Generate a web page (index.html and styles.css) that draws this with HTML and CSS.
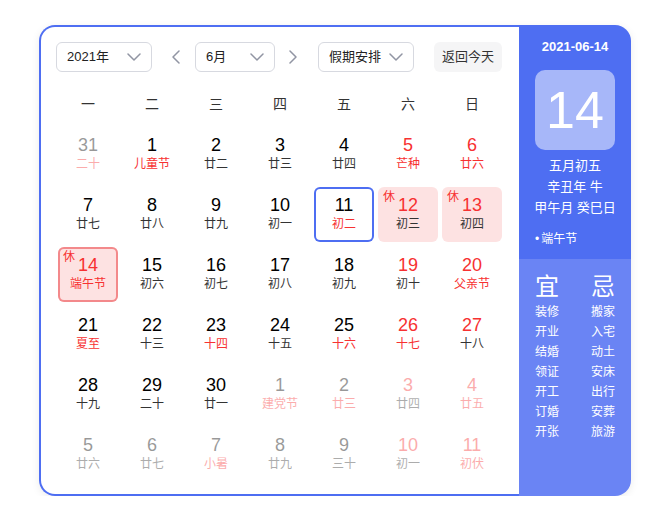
FILE: index.html
```html
<!DOCTYPE html>
<html lang="zh">
<head>
<meta charset="utf-8">
<title>万年历</title>
<link rel="stylesheet" href="styles.css">
</head>
<body>
<div class="calendar">
  <div class="main">
    <div class="toolbar">
      <div class="select year"><span>2021年</span><svg class="chev" width="14" height="8" viewBox="0 0 14 8"><path d="M1 1 L7 7 L13 1"/></svg></div>
      <div class="arrow prev"><svg width="8" height="14" viewBox="0 0 8 14"><path d="M7 1 L1 7 L7 13"/></svg></div>
      <div class="select month"><span>6月</span><svg class="chev" width="14" height="8" viewBox="0 0 14 8"><path d="M1 1 L7 7 L13 1"/></svg></div>
      <div class="arrow next"><svg width="8" height="14" viewBox="0 0 8 14"><path d="M1 1 L7 7 L1 13"/></svg></div>
      <div class="select holiday"><span>假期安排</span><svg class="chev" width="14" height="8" viewBox="0 0 14 8"><path d="M1 1 L7 7 L13 1"/></svg></div>
      <div class="today-btn">返回今天</div>
    </div>
    <div class="weekdays">
      <div>一</div><div>二</div><div>三</div><div>四</div><div>五</div><div>六</div><div>日</div>
    </div>
    <div class="days">
      <div class="cell off lred"><div class="num">31</div><div class="lunar">二十</div></div>
      <div class="cell lred"><div class="num">1</div><div class="lunar">儿童节</div></div>
      <div class="cell"><div class="num">2</div><div class="lunar">廿二</div></div>
      <div class="cell"><div class="num">3</div><div class="lunar">廿三</div></div>
      <div class="cell"><div class="num">4</div><div class="lunar">廿四</div></div>
      <div class="cell red lred"><div class="num">5</div><div class="lunar">芒种</div></div>
      <div class="cell red lred"><div class="num">6</div><div class="lunar">廿六</div></div>

      <div class="cell"><div class="num">7</div><div class="lunar">廿七</div></div>
      <div class="cell"><div class="num">8</div><div class="lunar">廿八</div></div>
      <div class="cell"><div class="num">9</div><div class="lunar">廿九</div></div>
      <div class="cell"><div class="num">10</div><div class="lunar">初一</div></div>
      <div class="cell sel lred"><div class="num">11</div><div class="lunar">初二</div></div>
      <div class="cell rest red"><span class="badge">休</span><div class="num">12</div><div class="lunar">初三</div></div>
      <div class="cell rest red"><span class="badge">休</span><div class="num">13</div><div class="lunar">初四</div></div>

      <div class="cell rest today red lred"><span class="badge">休</span><div class="num">14</div><div class="lunar">端午节</div></div>
      <div class="cell"><div class="num">15</div><div class="lunar">初六</div></div>
      <div class="cell"><div class="num">16</div><div class="lunar">初七</div></div>
      <div class="cell"><div class="num">17</div><div class="lunar">初八</div></div>
      <div class="cell"><div class="num">18</div><div class="lunar">初九</div></div>
      <div class="cell red"><div class="num">19</div><div class="lunar">初十</div></div>
      <div class="cell red lred"><div class="num">20</div><div class="lunar">父亲节</div></div>

      <div class="cell lred"><div class="num">21</div><div class="lunar">夏至</div></div>
      <div class="cell"><div class="num">22</div><div class="lunar">十三</div></div>
      <div class="cell lred"><div class="num">23</div><div class="lunar">十四</div></div>
      <div class="cell"><div class="num">24</div><div class="lunar">十五</div></div>
      <div class="cell lred"><div class="num">25</div><div class="lunar">十六</div></div>
      <div class="cell red lred"><div class="num">26</div><div class="lunar">十七</div></div>
      <div class="cell red"><div class="num">27</div><div class="lunar">十八</div></div>

      <div class="cell"><div class="num">28</div><div class="lunar">十九</div></div>
      <div class="cell"><div class="num">29</div><div class="lunar">二十</div></div>
      <div class="cell"><div class="num">30</div><div class="lunar">廿一</div></div>
      <div class="cell off lred"><div class="num">1</div><div class="lunar">建党节</div></div>
      <div class="cell off lred"><div class="num">2</div><div class="lunar">廿三</div></div>
      <div class="cell off red"><div class="num">3</div><div class="lunar">廿四</div></div>
      <div class="cell off red lred"><div class="num">4</div><div class="lunar">廿五</div></div>

      <div class="cell off"><div class="num">5</div><div class="lunar">廿六</div></div>
      <div class="cell off"><div class="num">6</div><div class="lunar">廿七</div></div>
      <div class="cell off lred"><div class="num">7</div><div class="lunar">小暑</div></div>
      <div class="cell off"><div class="num">8</div><div class="lunar">廿九</div></div>
      <div class="cell off"><div class="num">9</div><div class="lunar">三十</div></div>
      <div class="cell off red"><div class="num">10</div><div class="lunar">初一</div></div>
      <div class="cell off red lred"><div class="num">11</div><div class="lunar">初伏</div></div>
    </div>
  </div>
  <div class="side">
    <div class="side-top">
      <div class="side-date">2021-06-14</div>
      <div class="big-day">14</div>
      <div class="info">
        <div>五月初五</div>
        <div>辛丑年 牛</div>
        <div>甲午月 癸巳日</div>
      </div>
      <div class="fest"><span class="dot">•</span>端午节</div>
    </div>
    <div class="side-bottom">
      <div class="col">
        <div class="big">宜</div>
        <div>装修</div><div>开业</div><div>结婚</div><div>领证</div><div>开工</div><div>订婚</div><div>开张</div>
      </div>
      <div class="col">
        <div class="big">忌</div>
        <div>搬家</div><div>入宅</div><div>动土</div><div>安床</div><div>出行</div><div>安葬</div><div>旅游</div>
      </div>
    </div>
  </div>
</div>
</body>
</html>
```

FILE: styles.css
```css
html, body {
  margin: 0;
  padding: 0;
  background: #fff;
}
body {
  padding: 25px 0 0 39px;
  font-family: "Liberation Sans", "Noto Sans CJK SC", sans-serif;
  color: #222;
}
.calendar {
  display: flex;
  width: 592px;
  height: 471px;
  border-radius: 16px;
  box-shadow: 0 2px 8px rgba(0, 0, 0, 0.08);
}
.main {
  box-sizing: border-box;
  width: 480px;
  height: 471px;
  border: 2px solid #4e6ef2;
  border-right: none;
  border-radius: 16px 0 0 16px;
  background: #fff;
  padding: 15px 0 0 15px;
}
.toolbar {
  display: flex;
  align-items: center;
  height: 30px;
}
.select {
  box-sizing: border-box;
  height: 30px;
  border: 1px solid #d7d9e0;
  border-radius: 6px;
  padding: 0 10px 0 10px;
  display: flex;
  align-items: center;
  justify-content: space-between;
  font-size: 13px;
  color: #222;
}
.select span {
  line-height: 28px;
}
.year { width: 96px; }
.month { width: 80px; }
.holiday { width: 96px; }
.chev path, .arrow path {
  fill: none;
  stroke: #9195a3;
  stroke-width: 1.5;
  stroke-linecap: round;
  stroke-linejoin: round;
}
.arrow {
  display: flex;
  align-items: center;
  height: 30px;
}
.arrow svg { display: block; }
.prev { margin: 0 15px 0 20px; }
.next { margin: 0 21px 0 14px; }
.today-btn {
  margin-left: 20px;
  width: 68px;
  height: 30px;
  line-height: 30px;
  text-align: center;
  background: #f5f5f6;
  border-radius: 6px;
  font-size: 13px;
  color: #333;
}
.weekdays, .days {
  display: grid;
  grid-template-columns: repeat(7, 60px);
  column-gap: 4px;
  margin-left: 2px;
}
.weekdays {
  margin-top: 17px;
  height: 30px;
  line-height: 30px;
  text-align: center;
  font-size: 14px;
  color: #333;
}
.days {
  margin-top: 8px;
  grid-auto-rows: 55px;
  row-gap: 5px;
}
.cell {
  position: relative;
  box-sizing: border-box;
  border-radius: 6px;
  text-align: center;
  padding-top: 8px;
}
.num {
  font-size: 18px;
  line-height: 20px;
  color: #000;
}
.lunar {
  font-size: 12px;
  line-height: 18px;
  color: #333;
}
.cell.red .num { color: #f73131; }
.cell.lred .lunar { color: #f73131; }
.cell.off { opacity: 0.4; }
.cell.rest { background: #fde2e2; }
.cell.sel { box-shadow: inset 0 0 0 2px #4e6ef2; }
.cell.today { box-shadow: inset 0 0 0 2px #f3898b; }
.badge {
  position: absolute;
  top: 3px;
  left: 5px;
  font-size: 12px;
  line-height: 14px;
  color: #f73131;
}
.side {
  width: 112px;
  height: 471px;
  display: flex;
  flex-direction: column;
  border-radius: 0 16px 16px 0;
  overflow: hidden;
  color: #fff;
}
.side-top {
  height: 234px;
  background: #4e6ef2;
  box-sizing: border-box;
  padding-top: 13px;
  text-align: center;
}
.side-date {
  font-size: 13px;
  font-weight: bold;
  line-height: 18px;
}
.big-day {
  width: 80px;
  height: 80px;
  margin: 14px auto 0;
  border-radius: 10px;
  background: rgba(255, 255, 255, 0.5);
  font-size: 52px;
  line-height: 80px;
  color: #fff;
}
.info {
  margin-top: 5px;
  font-size: 13px;
  line-height: 21px;
}
.fest {
  margin-top: 11px;
  text-align: left;
  padding-left: 16px;
  font-size: 12px;
  line-height: 20px;
}
.dot {
  margin-right: 2px;
}
.side-bottom {
  flex: 1;
  background: #6a84f4;
  display: grid;
  grid-template-columns: 56px 56px;
  padding-top: 13px;
  text-align: center;
  font-size: 12px;
  line-height: 20px;
}
.col .big {
  font-size: 24px;
  line-height: 30px;
}
```
